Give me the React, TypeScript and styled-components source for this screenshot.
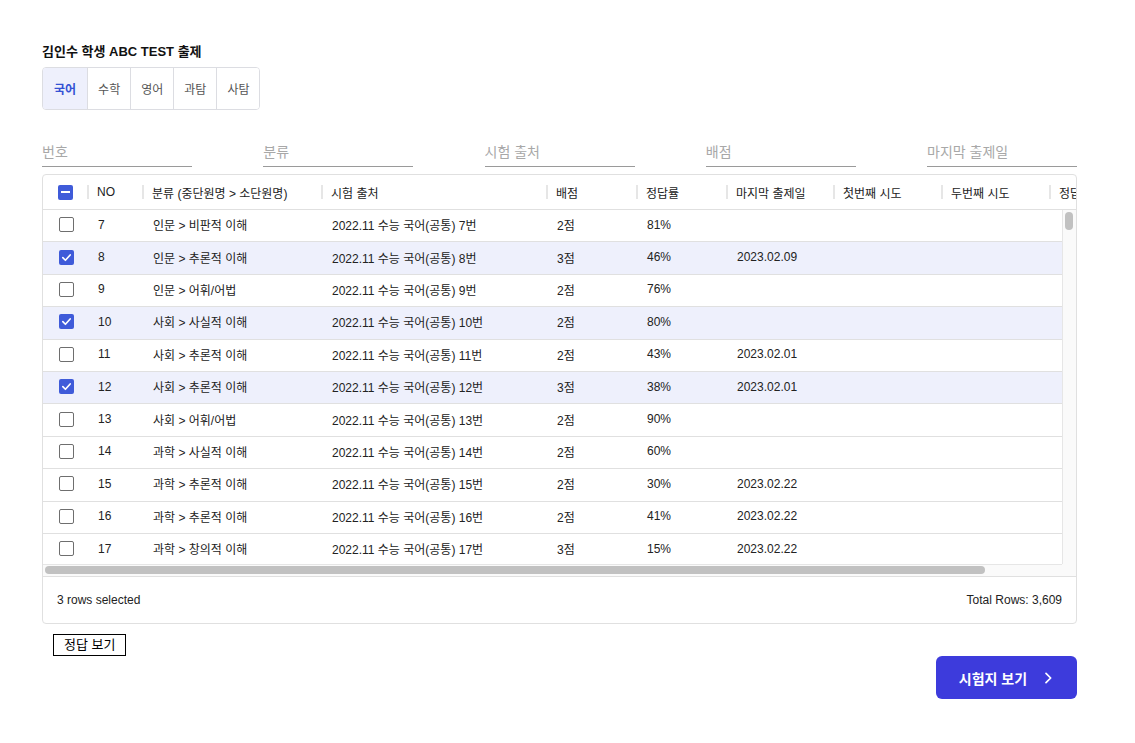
import React from 'react';
import styled, { createGlobalStyle } from 'styled-components';

const GlobalStyle = createGlobalStyle`
  body {
    margin: 0;
    background: #fff;
    font-family: "Liberation Sans", "Noto Sans CJK KR", sans-serif;
    color: #222;
  }
`;

type Row = {
  no: number;
  category: string;
  source: string;
  score: string;
  rate: string;
  lastDate: string;
  selected: boolean;
};

const rows: Row[] = [
  { no: 7, category: '인문 > 비판적 이해', source: '2022.11 수능 국어(공통) 7번', score: '2점', rate: '81%', lastDate: '', selected: false },
  { no: 8, category: '인문 > 추론적 이해', source: '2022.11 수능 국어(공통) 8번', score: '3점', rate: '46%', lastDate: '2023.02.09', selected: true },
  { no: 9, category: '인문 > 어휘/어법', source: '2022.11 수능 국어(공통) 9번', score: '2점', rate: '76%', lastDate: '', selected: false },
  { no: 10, category: '사회 > 사실적 이해', source: '2022.11 수능 국어(공통) 10번', score: '2점', rate: '80%', lastDate: '', selected: true },
  { no: 11, category: '사회 > 추론적 이해', source: '2022.11 수능 국어(공통) 11번', score: '2점', rate: '43%', lastDate: '2023.02.01', selected: false },
  { no: 12, category: '사회 > 추론적 이해', source: '2022.11 수능 국어(공통) 12번', score: '3점', rate: '38%', lastDate: '2023.02.01', selected: true },
  { no: 13, category: '사회 > 어휘/어법', source: '2022.11 수능 국어(공통) 13번', score: '2점', rate: '90%', lastDate: '', selected: false },
  { no: 14, category: '과학 > 사실적 이해', source: '2022.11 수능 국어(공통) 14번', score: '2점', rate: '60%', lastDate: '', selected: false },
  { no: 15, category: '과학 > 추론적 이해', source: '2022.11 수능 국어(공통) 15번', score: '2점', rate: '30%', lastDate: '2023.02.22', selected: false },
  { no: 16, category: '과학 > 추론적 이해', source: '2022.11 수능 국어(공통) 16번', score: '2점', rate: '41%', lastDate: '2023.02.22', selected: false },
  { no: 17, category: '과학 > 창의적 이해', source: '2022.11 수능 국어(공통) 17번', score: '3점', rate: '15%', lastDate: '2023.02.22', selected: false },
];

const columns = [
  { key: 'check', label: '', width: 46 },
  { key: 'no', label: 'NO', width: 55 },
  { key: 'category', label: '분류 (중단원명 > 소단원명)', width: 179 },
  { key: 'source', label: '시험 출처', width: 225 },
  { key: 'score', label: '배점', width: 90 },
  { key: 'rate', label: '정답률', width: 90 },
  { key: 'lastDate', label: '마지막 출제일', width: 107 },
  { key: 'first', label: '첫번째 시도', width: 108 },
  { key: 'second', label: '두번째 시도', width: 108 },
  { key: 'answer', label: '정답', width: 100 },
];

const subjects = ['국어', '수학', '영어', '과탐', '사탐'];
const filters = ['번호', '분류', '시험 출처', '배점', '마지막 출제일'];

const CheckBox: React.FC<{ state: 'on' | 'off' | 'some' }> = ({ state }) => (
  <Box $filled={state !== 'off'}>
    {state === 'on' && (
      <svg width="11" height="11" viewBox="0 0 12 12">
        <path d="M2 6.2 L4.8 9 L10 3.2" fill="none" stroke="#fff" strokeWidth="1.8" strokeLinecap="round" strokeLinejoin="round" />
      </svg>
    )}
    {state === 'some' && <Dash />}
  </Box>
);

const App: React.FC = () => {
  const cellValue = (row: Row, key: string) => {
    switch (key) {
      case 'no': return row.no;
      case 'category': return row.category;
      case 'source': return row.source;
      case 'score': return row.score;
      case 'rate': return row.rate;
      case 'lastDate': return row.lastDate;
      default: return '';
    }
  };

  return (
    <>
      <GlobalStyle />
      <Page>
        <Title>김인수 학생 ABC TEST 출제</Title>
        <Tabs>
          {subjects.map((s, i) => (
            <Tab key={s} $active={i === 0}>{s}</Tab>
          ))}
        </Tabs>

        <FilterRow>
          {filters.map((f) => (
            <FilterInput key={f} placeholder={f} />
          ))}
        </FilterRow>

        <Grid>
          <HeaderRow>
            {columns.map((c, i) => (
              <HeaderCell key={c.key} style={{ width: c.width }}>
                <HeaderLabel $center={i === 0}>
                  {i === 0 ? <CheckBox state="some" /> : c.label}
                </HeaderLabel>
                {i < columns.length - 1 && <Separator />}
              </HeaderCell>
            ))}
          </HeaderRow>

          <Body>
            <Viewport>
              {rows.map((r) => (
                <DataRow key={r.no} $selected={r.selected}>
                  {columns.map((c, i) => (
                    <Cell key={c.key} style={{ width: c.width }} $center={i === 0}>
                      {i === 0 ? <CheckBox state={r.selected ? 'on' : 'off'} /> : cellValue(r, c.key)}
                    </Cell>
                  ))}
                </DataRow>
              ))}
            </Viewport>
            <VTrack>
              <VThumb />
            </VTrack>
            <HTrack>
              <HThumb />
            </HTrack>
            <Corner />
          </Body>

          <Footer>
            <span>3 rows selected</span>
            <span>Total Rows: 3,609</span>
          </Footer>
        </Grid>

        <AnswerButton>정답 보기</AnswerButton>

        <Actions>
          <PrimaryButton>
            시험지 보기
            <svg width="16" height="16" viewBox="0 0 24 24" fill="none" stroke="#fff" strokeWidth="2.6" strokeLinecap="round" strokeLinejoin="round">
              <path d="M9 5l7 7-7 7" />
            </svg>
          </PrimaryButton>
        </Actions>
      </Page>
    </>
  );
};

export default App;

const Page = styled.div`
  width: 1035px;
  padding: 44px 0 0 42px;
  display: flex;
  flex-direction: column;
`;

const Title = styled.h1`
  margin: 0 0 7px;
  font-size: 13px;
  line-height: 16px;
  font-weight: 700;
  color: #111;
`;

const Tabs = styled.div`
  display: flex;
  align-self: flex-start;
  border: 1px solid #dcdde2;
  border-radius: 4px;
  overflow: hidden;
`;

const Tab = styled.button<{ $active: boolean }>`
  height: 41px;
  padding: 0 10px;
  border: none;
  border-left: 1px solid #dcdde2;
  background: ${(p) => (p.$active ? '#eef0fc' : '#fff')};
  color: ${(p) => (p.$active ? '#3452d4' : '#555')};
  font-family: inherit;
  font-size: 12px;
  font-weight: ${(p) => (p.$active ? 600 : 400)};
  cursor: pointer;

  &:first-child {
    border-left: none;
    padding: 0 11px;
  }
`;

const FilterRow = styled.div`
  display: flex;
  justify-content: space-between;
  margin-top: 28px;
`;

const FilterInput = styled.input`
  width: 150px;
  height: 28px;
  padding: 0;
  border: none;
  border-bottom: 1px solid #9a9a9a;
  outline: none;
  font-family: inherit;
  font-size: 14px;
  color: #222;
  background: transparent;

  &::placeholder {
    color: #a8a8a8;
  }
`;

const Grid = styled.div`
  margin-top: 7px;
  border: 1px solid #e0e0e0;
  border-radius: 4px;
  overflow: hidden;
  display: flex;
  flex-direction: column;
`;

const HeaderRow = styled.div`
  display: flex;
  height: 34px;
  border-bottom: 1px solid #e0e0e0;
  overflow: hidden;
`;

const HeaderCell = styled.div`
  flex: none;
  display: flex;
  align-items: center;
  font-size: 12px;
  color: #222;
`;

const HeaderLabel = styled.div<{ $center: boolean }>`
  flex: 1;
  display: flex;
  align-items: center;
  justify-content: ${(p) => (p.$center ? 'center' : 'flex-start')};
  padding-left: ${(p) => (p.$center ? '1px' : '8px')};
  white-space: nowrap;
  overflow: hidden;
`;

const Separator = styled.div`
  flex: none;
  width: 2px;
  height: 14px;
  background: #e6e6e6;
`;

const Body = styled.div`
  display: grid;
  grid-template-columns: 1fr 14px;
  grid-template-rows: 354px 12px;
`;

const Viewport = styled.div`
  overflow: hidden;
`;

const VTrack = styled.div`
  background: #fafafa;
  border-left: 1px solid #e6e6e6;
  padding: 2px 3px 0 2px;
`;

const VThumb = styled.div`
  height: 18px;
  border-radius: 4px;
  background: #c1c1c1;
`;

const HTrack = styled.div`
  background: #fafafa;
  border-top: 1px solid #e6e6e6;
  padding: 1px 0 2px 2px;
  box-sizing: border-box;
`;

const HThumb = styled.div`
  width: 940px;
  height: 8px;
  border-radius: 4px;
  background: #c1c1c1;
`;

const Corner = styled.div`
  background: #fafafa;
`;

const DataRow = styled.div<{ $selected: boolean }>`
  display: flex;
  width: 1108px;
  height: 32.4px;
  box-sizing: border-box;
  border-bottom: 1px solid #e0e0e0;
  background: ${(p) => (p.$selected ? '#eef0fc' : '#fff')};
`;

const Cell = styled.div<{ $center: boolean }>`
  flex: none;
  display: flex;
  align-items: center;
  justify-content: ${(p) => (p.$center ? 'center' : 'flex-start')};
  padding-left: ${(p) => (p.$center ? '1px' : '9px')};
  padding-bottom: 2px;
  box-sizing: border-box;
  font-size: 12px;
  color: #222;
  white-space: nowrap;
`;

const Box = styled.span<{ $filled: boolean }>`
  width: 15px;
  height: 15px;
  box-sizing: border-box;
  border-radius: 2px;
  display: inline-flex;
  align-items: center;
  justify-content: center;
  background: ${(p) => (p.$filled ? '#3f5bd9' : '#fff')};
  border: ${(p) => (p.$filled ? 'none' : '1.6px solid #6e6e6e')};
`;

const Dash = styled.span`
  width: 9px;
  height: 2px;
  background: #fff;
`;

const Footer = styled.div`
  height: 47px;
  border-top: 1px solid #e0e0e0;
  box-sizing: border-box;
  display: flex;
  align-items: center;
  justify-content: space-between;
  padding: 0 14px;
  font-size: 12px;
  color: #222;
`;

const AnswerButton = styled.button`
  align-self: flex-start;
  margin: 10px 0 0 11px;
  height: 22px;
  padding: 0 10px;
  border: 1px solid #000;
  border-radius: 0;
  background: #fff;
  font-family: inherit;
  font-size: 13px;
  line-height: 18px;
  color: #000;
`;

const Actions = styled.div`
  display: flex;
  justify-content: flex-end;
`;

const PrimaryButton = styled.button`
  width: 141px;
  height: 43px;
  border: none;
  border-radius: 6px;
  background: #3d3bdc;
  color: #fff;
  font-family: inherit;
  font-size: 14px;
  font-weight: 700;
  display: flex;
  align-items: center;
  justify-content: center;
  gap: 13px;
  padding: 0 0 0 2px;
  cursor: pointer;
`;
